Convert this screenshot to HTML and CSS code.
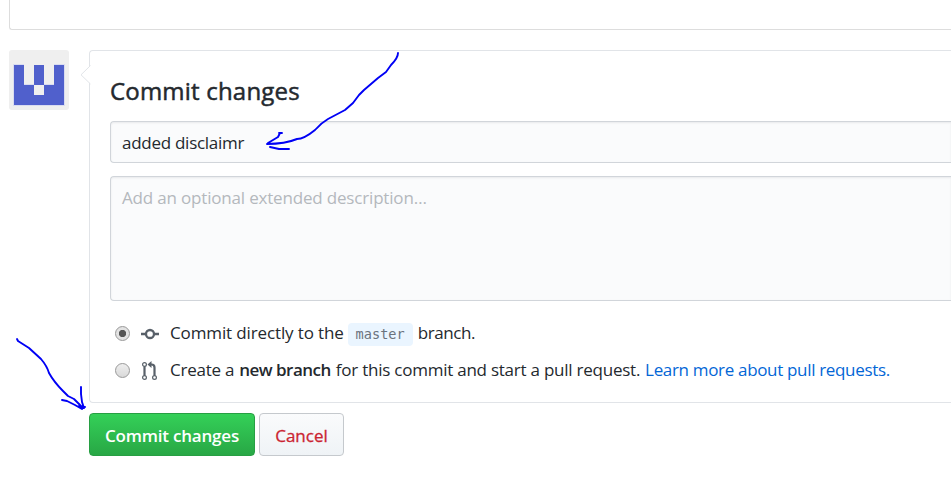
FILE: index.html
```html
<!DOCTYPE html>
<html lang="en">
<head>
<meta charset="utf-8">
<title>Commit changes</title>
<link rel="stylesheet" href="styles.css">
</head>
<body>
<div class="editor"></div>
<main class="commit">
  <svg class="avatar" viewBox="0 0 60 60"><rect width="60" height="60" rx="3" fill="#efefef"/><path fill="#d9dcf0" d="M4 14h21v6h10v-6h21v42H4z"/><path fill="#efefef" d="M15 14h10v20H15zM35 14h10v20H35z"/><path fill="#5060cc" d="M5 15h10v20h10V15h10v20h10V15h10v40H5z"/><path fill="#efefef" d="M25 35h10v10H25z"/></svg>
  <form class="form">
    <section class="box">
      <svg class="caret" viewBox="0 0 11 20"><path d="M10.500 0.500L1 9.800l9.500 9.200" fill="#fff" stroke="#e1e4e8"/></svg>
      <h1 class="title"><span>Commit changes</span></h1>
      <div class="field summary"><span>added disclaimr</span></div>
      <div class="field description"><span>Add an optional extended description…</span></div>
      <div class="option first">
        <i class="radio checked"></i>
        <svg class="icon" viewBox="0 0 18 20"><path d="M0 10h5M13 10h5" stroke="#586069" stroke-width="2.500"/><circle cx="9" cy="10" r="4" fill="none" stroke="#586069" stroke-width="2.300"/></svg>
        <span class="label direct">Commit directly to the</span><code>master</code><span class="label end">branch.</span>
      </div>
      <div class="option">
        <i class="radio"></i>
        <svg class="icon" viewBox="0 0 18 20"><g fill="none" stroke="#586069"><path d="M3.500 5.500v9M13.500 14.500V6.500q0-3-3-3H9" stroke-width="2.200"/><circle cx="3.500" cy="3.500" r="1.900" stroke-width="1.200"/><circle cx="3.500" cy="16.500" r="1.900" stroke-width="1.200"/><circle cx="13.500" cy="16.500" r="1.900" stroke-width="1.200"/></g><path d="M10.500 0v7L6.500 3.500z" fill="#586069"/></svg>
        <span class="label create">Create a</span><b class="label">new branch</b><span class="label start">for this commit and start a pull request.</span><a class="label">Learn more about pull requests.</a>
      </div>
    </section>
    <div class="actions">
      <div class="button primary"><span>Commit changes</span></div>
      <div class="button cancel"><span>Cancel</span></div>
    </div>
  </form>
</main>
<svg class="ink" viewBox="0 0 951 491"><path d="M398 53q0 5-7 12l-5 7-8 6-14 12-5 5-6 8-8 7-17 9q-7 4-13 11-11 9-18 9-12 5-30 5M268 143l5-3 5-3 2-4 M270 147l9 2h10M279 133h3"/><path d="M17 339l1 2 11 7 12 11q6 7 8 14 5 9 14 18l5 5 6 3 9 9M81 387v7l1 8 2 6M62 400l5 1 8 4 7 4M79 406l6 1"/></svg>
</body>
</html>
```
FILE: styles.css
```css
* { box-sizing: border-box; }
body {
  margin: 0;
  height: 491px;
  overflow: hidden;
  background: #fff;
  color: #24292e;
  font: 17px/26px "Open Sans", "Noto Sans", sans-serif;
}
span, b, a { white-space: nowrap; }
.editor {
  height: 30px;
  margin-left: 9px;
  border: solid #ddd;
  border-width: 0 0 1px 1px;
  border-bottom-left-radius: 3px;
}
.commit { display: flex; gap: 20px; padding: 20px 0 0 9px; }
.avatar { width: 60px; height: 60px; flex: none; }
.form { flex: 1; }
.box {
  position: relative;
  height: 353px;
  padding: 24px 0 0 20px;
  border: 1px solid #e1e4e8;
  border-right: 0;
  border-radius: 4px 0 0 4px;
}
.caret { position: absolute; left: -10px; top: 14px; width: 11px; height: 20px; }
.title {
  margin: 0;
  height: 46px;
  font-size: 24px;
  line-height: 32px;
  font-weight: 400;
  letter-spacing: .2px;
  -webkit-text-stroke: .5px currentColor;
}
.field {
  padding: 8px 11px;
  border: 1px solid #d1d5da;
  border-right: 0;
  border-radius: 4px 0 0 4px;
  background: #fafbfc;
  box-shadow: inset 0 1px 2px rgba(27, 31, 35, .075);
}
.summary { height: 42px; margin-bottom: 13px; letter-spacing: -.27px; }
.description { height: 125px; color: #b4b8bd; letter-spacing: -.18px; }
.option { display: flex; align-items: center; height: 37px; padding-left: 5px; }
.first { margin-top: 14px; }
.radio {
  width: 15px;
  height: 15px;
  border: 1px solid #999;
  border-radius: 50%;
  background: linear-gradient(#eee, #d9d9d9);
}
.checked { background: radial-gradient(circle, #555 0 3.300px, #e2e2e2 4px); }
.icon { width: 18px; height: 20px; margin: 0 11px; }
code {
  width: 65px;
  height: 23px;
  margin: 2px 5px 0 4px;
  border-radius: 4px;
  background: #eaf5ff;
  color: #6a737d;
  font: 13.600px/23px "DejaVu Sans Mono", monospace;
  text-align: center;
}
.label { margin: 0 5px 2px 0; }
.direct { margin-right: 0; letter-spacing: -.13px; }
.end { letter-spacing: -.4px; }
.create { letter-spacing: -.25px; }
.start { letter-spacing: -.24px; }
b { font-weight: 600; letter-spacing: -.5px; }
a { color: #0366d6; letter-spacing: -.33px; }
.actions { display: flex; gap: 4px; margin-top: 10px; }
.button {
  height: 43px;
  border: 1px solid #c5c9cd;
  border-radius: 4px;
  font-weight: 600;
  line-height: 43px;
  text-align: center;
}
.primary { width: 166px; color: #fff; background: linear-gradient(#34d058, #28a745); border-color: #279f43; letter-spacing: -.2px; }
.cancel {
  width: 85px;
  color: #cb2431;
  background: linear-gradient(#fafbfc, #eff3f6);
  font-weight: 400;
  -webkit-text-stroke: .3px currentColor;
}
.ink {
  position: absolute;
  inset: 0;
  width: 951px;
  height: 491px;
  fill: none;
  stroke: #0000f5;
  stroke-width: 1.900;
  stroke-linecap: round;
  stroke-linejoin: round;
}
```
